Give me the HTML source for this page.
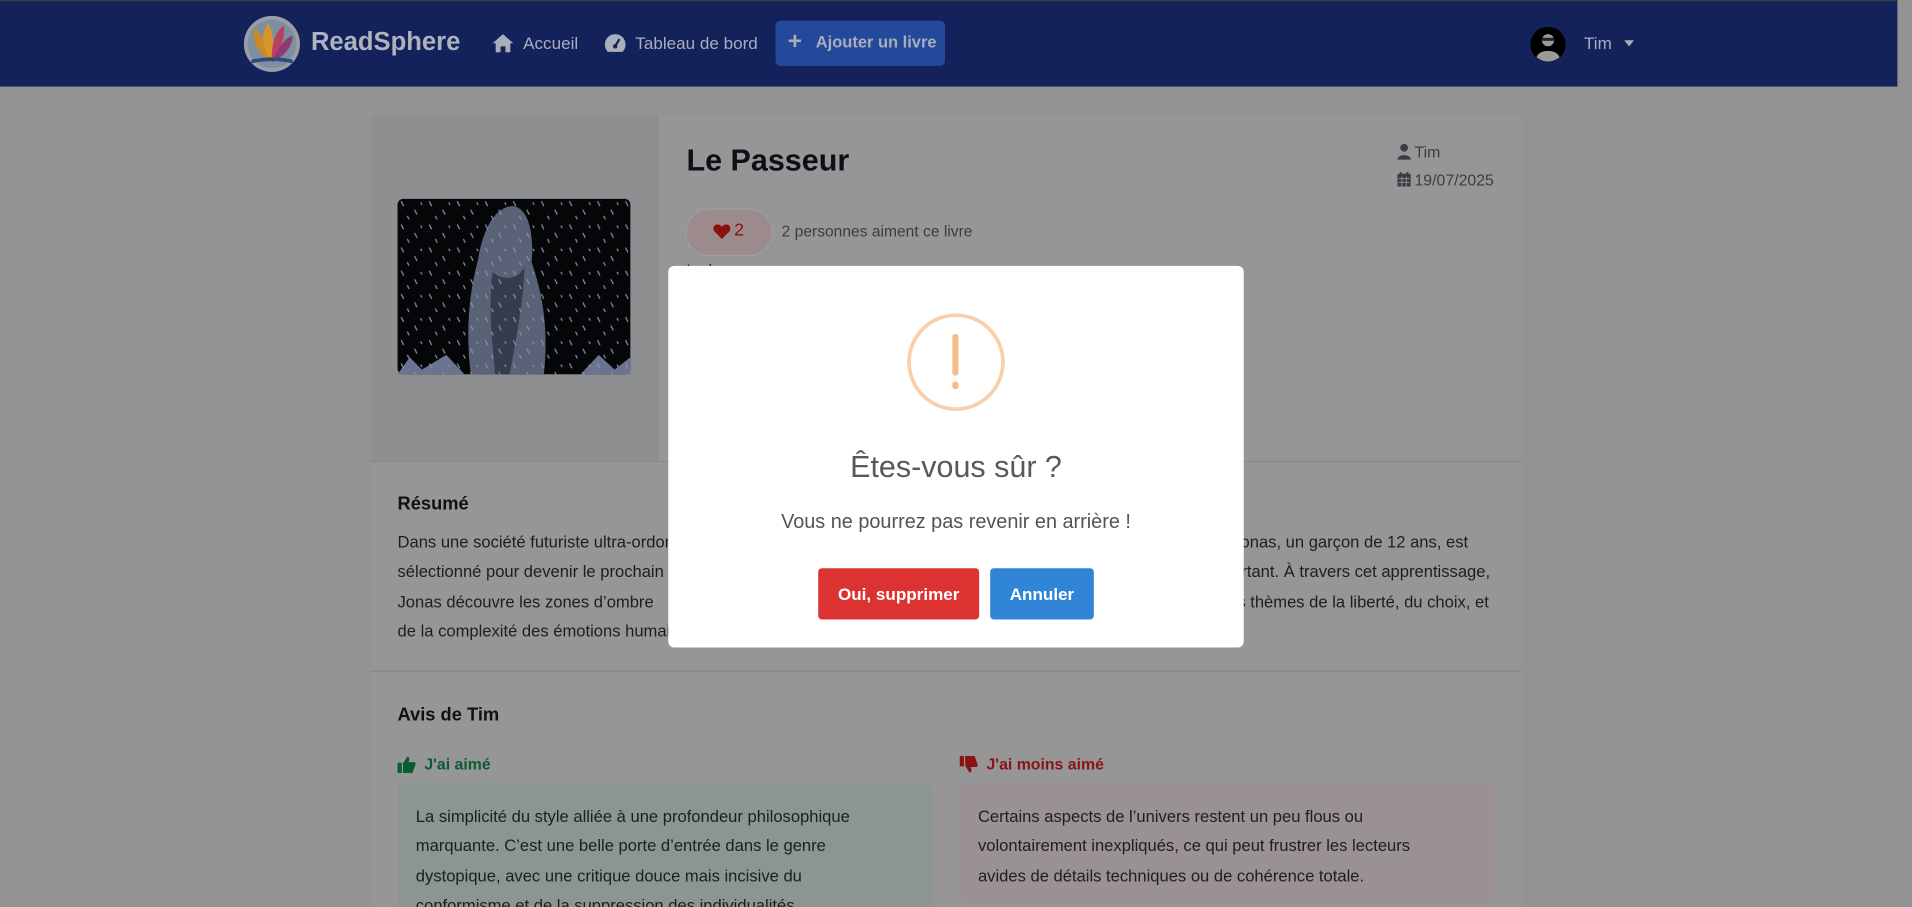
<!DOCTYPE html>
<html><head><meta charset="utf-8">
<style>
html,body{margin:0;padding:0;width:1912px;height:907px;overflow:hidden;background:#939394;}
#w{position:absolute;left:0;top:0;width:1568px;height:744px;transform:scale(1.21939);transform-origin:0 0;font-family:"Liberation Sans",sans-serif;background:#939394;overflow:hidden}
.a{position:absolute;white-space:nowrap}
.nav{left:0;top:0;width:1556px;height:71px;background:#13225b;border-top:1px solid #3a3a3a;box-sizing:border-box}
.navt{color:#a9aebb;font-size:14px}
.card{left:304px;top:94px;width:944px;height:650px;background:#969696;border-radius:6px 6px 0 0;overflow:hidden}
.p{font-size:13.6px;color:#1e1e1e}
</style></head><body><div id="w">
<div class="a nav"></div>
<svg class="a" style="left:200px;top:13px" width="46" height="46" viewBox="0 0 46 46">
<circle cx="23" cy="23" r="23" fill="#9b9ea6"/>
<circle cx="23" cy="23" r="20" fill="#7d8fa0"/>
<path d="M23 38 C10 30 6 20 9 10 C14 14 18 22 23 38Z" fill="#c88a2a"/>
<path d="M23 38 C14 26 14 14 20 6 C24 12 25 24 23 38Z" fill="#d6962b"/>
<path d="M23 38 C22 24 26 12 33 8 C34 18 30 28 23 38Z" fill="#b84060"/>
<path d="M23 38 C28 26 34 18 40 16 C40 26 32 34 23 38Z" fill="#8e3b74"/>
<path d="M6 36 Q23 32 40 36 L40 39 Q23 35 6 39Z" fill="#2c4a7a"/>
</svg>
<div class="a" style="left:255px;top:23px;font-size:21px;font-weight:bold;color:#aeb2bc">ReadSphere</div>
<svg class="a" style="left:404px;top:28px" width="17" height="15" viewBox="0 0 17 15"><path d="M8.5 0 L17 7.5 H14.5 V15 H10.5 V10 H6.5 V15 H2.5 V7.5 H0Z" fill="#a9aebb"/></svg>
<div class="a navt" style="left:429px;top:27px">Accueil</div>
<svg class="a" style="left:496px;top:28px" width="17" height="15" viewBox="0 0 17 15"><path d="M8.5 0 A8.5 8.5 0 0 1 17 8.5 C17 11 16 13 14.5 14.5 H2.5 C1 13 0 11 0 8.5 A8.5 8.5 0 0 1 8.5 0Z" fill="#a9aebb"/><path d="M8.5 10 L12 4" stroke="#13225b" stroke-width="1.8"/><circle cx="8.5" cy="10" r="1.8" fill="#13225b"/></svg>
<div class="a navt" style="left:521px;top:27px">Tableau de bord</div>
<div class="a" style="left:636px;top:17px;width:139px;height:37px;background:#24489a;border-radius:4px"></div>
<div class="a" style="left:646px;top:23px;font-size:20px;color:#a9aebb;font-weight:bold">+</div>
<div class="a navt" style="left:669px;top:27px;font-weight:bold;font-size:13.5px">Ajouter un livre</div>
<svg class="a" style="left:1255px;top:22px" width="29" height="29" viewBox="0 0 29 29"><circle cx="14.5" cy="14.5" r="14.5" fill="#000"/><circle cx="14.5" cy="11" r="5" fill="#9a9a9a"/><rect x="9.5" y="9" width="10" height="2.5" fill="#222"/><path d="M5 25 C7 18 22 18 24 25 A14.5 14.5 0 0 1 5 25Z" fill="#9a9a9a"/></svg>
<div class="a navt" style="left:1299px;top:27px">Tim</div>
<div class="a" style="left:1332px;top:33px;width:0;height:0;border-left:4.5px solid transparent;border-right:4.5px solid transparent;border-top:5px solid #a9aebb"></div>

<div class="a card">
 <div class="a" style="left:0;top:0;width:236px;height:284px;background:#8e8f91"></div>
 <div class="a" style="left:0;top:284px;width:944px;height:1px;background:#888"></div>
 <div class="a" style="left:0;top:456px;width:944px;height:1px;background:#888"></div>
</div>
<svg class="a" style="left:326px;top:163px" width="191" height="144" viewBox="0 0 191 144">
<defs><pattern id="sn" width="23" height="19" patternUnits="userSpaceOnUse"><path d="M3 2 l2 4 M14 9 l2 4 M8 14 l1.5 3 M19 3 l1 2" stroke="#8890a8" stroke-width="1"/></pattern></defs>
<rect width="191" height="144" rx="5" fill="#050608"/>
<path d="M60 144 C56 110 58 80 66 50 C70 25 80 6 95 6 C108 8 112 30 110 52 C116 70 125 100 120 144Z" fill="#5a6278"/>
<path d="M78 60 C86 68 100 66 104 56 C104 80 98 110 92 144 H80 C78 120 74 90 78 60Z" fill="#363c4c"/>
<path d="M0 144 L10 130 L20 140 L40 128 L55 144Z M150 144 L165 128 L178 140 L191 130 V144Z" fill="#6a7390"/>
<rect width="191" height="144" rx="5" fill="url(#sn)"/>
</svg>
<div class="a" style="left:563px;top:118px;font-size:25px;font-weight:bold;color:#0d0f18">Le Passeur</div>
<svg class="a" style="left:1146px;top:118px" width="11" height="13" viewBox="0 0 11 13"><circle cx="5.5" cy="3.2" r="3.2" fill="#3a3d44"/><path d="M0 13 C0 8 11 8 11 13Z" fill="#3a3d44"/></svg>
<div class="a" style="left:1160px;top:117px;font-size:13px;color:#3a3d44">Tim</div>
<svg class="a" style="left:1146px;top:141px" width="11" height="12" viewBox="0 0 11 12"><rect x="0" y="1.5" width="11" height="10.5" rx="1" fill="#3a3d44"/><rect x="2" y="0" width="1.5" height="3" fill="#3a3d44"/><rect x="7.5" y="0" width="1.5" height="3" fill="#3a3d44"/><path d="M1 5.5h9M1 8.5h9M3.7 4v8M7.3 4v8" stroke="#969696" stroke-width=".7"/></svg>
<div class="a" style="left:1160px;top:140px;font-size:13px;color:#3a3d44">19/07/2025</div>
<div class="a" style="left:562px;top:171px;width:72px;height:39px;border-radius:20px;background:#9c8a8c;box-sizing:border-box;border:1px solid #9aa0a3"></div>
<svg class="a" style="left:585px;top:184px" width="14" height="12" viewBox="0 0 14 12"><path d="M7 12 L1 6 C-1 4 0 0 3.5 0 C5 0 6.3 1 7 2 C7.7 1 9 0 10.5 0 C14 0 15 4 13 6Z" fill="#8c1010"/></svg>
<div class="a" style="left:602px;top:181px;font-size:14.5px;color:#8c1010">2</div>
<div class="a" style="left:641px;top:182px;font-size:12.8px;color:#3a3d44">2 personnes aiment ce livre</div>
<div class="a" style="left:563px;top:214px;font-size:13px;color:#1e1e1e">Lu le</div>

<div class="a" style="left:326px;top:405px;font-size:15px;font-weight:bold;color:#111">Résumé</div>
<div class="a p" style="left:326px;top:437px">Dans une société futuriste ultra-ordonnée</div>
<div class="a p" style="left:326px;top:461px">sélectionné pour devenir le prochain</div>
<div class="a p" style="left:326px;top:486px">Jonas découvre les zones d’ombre</div>
<div class="a p" style="left:326px;top:510px">de la complexité des émotions humaines.</div>
<div class="a p" style="right:364px;top:437px">Jonas, un garçon de 12 ans, est</div>
<div class="a p" style="right:346px;top:461px">important. À travers cet apprentissage,</div>
<div class="a p" style="right:347px;top:486px">les thèmes de la liberté, du choix, et</div>

<div class="a" style="left:326px;top:578px;font-size:15px;font-weight:bold;color:#111">Avis de Tim</div>
<svg class="a" style="left:326px;top:620px" width="15" height="14" viewBox="0 0 15 14"><rect x="0" y="5.5" width="3.5" height="8.5" fill="#0b5c35"/><path d="M4.5 6 L8 0.5 C9.5 0.5 10 1.5 9.5 3.5 L9 5 H13.5 C15 5 15.2 6.5 14.5 7.5 L12.5 13.5 C12 14 11.5 14 11 14 H4.5Z" fill="#0b5c35"/></svg>
<div class="a" style="left:348px;top:619px;font-size:13px;font-weight:bold;color:#0b5c35">J'ai aimé</div>
<svg class="a" style="left:787px;top:620px" width="15" height="14" viewBox="0 0 15 14" transform="scale(1,-1)"><rect x="0" y="5.5" width="3.5" height="8.5" fill="#8a1414"/><path d="M4.5 6 L8 0.5 C9.5 0.5 10 1.5 9.5 3.5 L9 5 H13.5 C15 5 15.2 6.5 14.5 7.5 L12.5 13.5 C12 14 11.5 14 11 14 H4.5Z" fill="#8a1414"/></svg>
<div class="a" style="left:809px;top:619px;font-size:13px;font-weight:bold;color:#8a1414">J'ai moins aimé</div>
<div class="a" style="left:326px;top:642px;width:438px;height:102px;background:#8a968f;border-radius:5px 5px 0 0"></div>
<div class="a" style="left:787px;top:642px;width:439px;height:99px;background:#9a9292;border-radius:5px"></div>
<div class="a p" style="left:341px;top:658px;line-height:24.3px;height:86px;overflow:hidden">La simplicité du style alliée à une profondeur philosophique<br>marquante. C’est une belle porte d’entrée dans le genre<br>dystopique, avec une critique douce mais incisive du<br>conformisme et de la suppression des individualités.</div>
<div class="a p" style="left:802px;top:658px;line-height:24.3px">Certains aspects de l’univers restent un peu flous ou<br>volontairement inexpliqués, ce qui peut frustrer les lecteurs<br>avides de détails techniques ou de cohérence totale.</div>

<div class="a" style="left:548px;top:218px;width:472px;height:313px;background:#fff;border-radius:5px"></div>
<div class="a" style="left:744px;top:257px;width:80px;height:80px;box-sizing:border-box;border:3.5px solid #facea8;border-radius:50%"></div>
<div class="a" style="left:781px;top:274px;width:5px;height:34px;background:#f8bb86;border-radius:2px"></div>
<div class="a" style="left:781px;top:313px;width:5px;height:6px;background:#f8bb86;border-radius:2px"></div>
<div class="a" style="left:548px;width:472px;top:369px;text-align:center;font-size:25px;color:#595959">Êtes-vous sûr ?</div>
<div class="a" style="left:548px;width:472px;top:419px;text-align:center;font-size:16.3px;color:#545454">Vous ne pourrez pas revenir en arrière !</div>
<div class="a" style="left:671px;top:466px;width:132px;height:42px;background:#dc3232;border-radius:3px;color:#fff;font-size:14px;font-weight:bold;text-align:center;line-height:42px">Oui, supprimer</div>
<div class="a" style="left:812px;top:466px;width:85px;height:42px;background:#3085d6;border-radius:3px;color:#fff;font-size:14px;font-weight:bold;text-align:center;line-height:42px">Annuler</div>
</div></body></html>
